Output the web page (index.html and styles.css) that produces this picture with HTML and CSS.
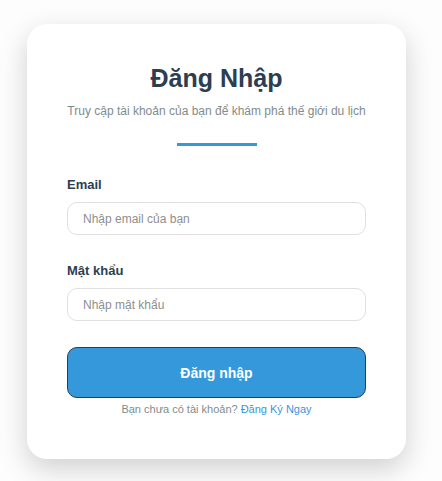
FILE: index.html
```html
<!DOCTYPE html>
<html lang="vi">
<head>
<meta charset="utf-8">
<title>Đăng Nhập</title>
<link rel="stylesheet" href="styles.css">
</head>
<body>
  <div class="card">
    <h1 class="title">Đăng Nhập</h1>
    <p class="subtitle">Truy cập tài khoản của bạn để khám phá thế giới du lịch</p>
    <div class="divider"></div>
    <form class="form">
      <div class="group">
        <label class="label" for="email">Email</label>
        <input class="input" id="email" type="email" placeholder="Nhập email của bạn">
      </div>
      <div class="group">
        <label class="label" for="password">Mật khẩu</label>
        <input class="input" id="password" type="password" placeholder="Nhập mật khẩu">
      </div>
      <button class="btn" type="button">Đăng nhập</button>
      <p class="footer">Bạn chưa có tài khoản? <a class="link" href="#">Đăng Ký Ngay</a></p>
    </form>
  </div>
</body>
</html>
```
FILE: styles.css
```css
* { box-sizing: border-box; }
html, body { margin: 0; padding: 0; }
body {
  background: #fdfdfd;
  font-family: "Liberation Sans", Arial, sans-serif;
  padding-top: 24px;
  padding-bottom: 22px;
}
.card {
  width: 379px;
  margin-left: 27px;
  background: #ffffff;
  border-radius: 20px;
  box-shadow: 0 10px 28px rgba(0, 0, 0, 0.18);
  padding: 39px 40px 43px;
  display: flex;
  flex-direction: column;
  align-items: stretch;
}
.title {
  margin: 0;
  font-size: 25px;
  line-height: 30px;
  font-weight: bold;
  color: #2c3e50;
  text-align: center;
}
.subtitle {
  margin: 10px 0 0;
  font-size: 12px;
  line-height: 16px;
  color: #7f8c8d;
  text-align: center;
  white-space: nowrap;
}
.divider {
  width: 80px;
  height: 3px;
  background: #3498db;
  margin: 24px auto 30px;
}
.form {
  display: flex;
  flex-direction: column;
  margin: 0;
}
.group {
  display: flex;
  flex-direction: column;
  margin-bottom: 27px;
}
.group:nth-child(2) { margin-bottom: 26px; }
.label {
  font-size: 13px;
  line-height: 17px;
  font-weight: bold;
  color: #2c3e50;
  margin-bottom: 9px;
}
.input {
  height: 33px;
  border: 1px solid #e0e0e0;
  border-radius: 10px;
  padding: 0 15px;
  font-family: "Liberation Sans", Arial, sans-serif;
  font-size: 12px;
  color: #333;
  outline: none;
  background: #fff;
}
.input::placeholder { color: #8e8e8e; }
.btn {
  height: 51px;
  background: #3498db;
  border: 1px solid #2c3e50;
  border-radius: 10px;
  color: #ffffff;
  font-family: "Liberation Sans", Arial, sans-serif;
  font-size: 14px;
  font-weight: bold;
  cursor: pointer;
}
.footer {
  margin: 4px 0 0;
  font-size: 11px;
  line-height: 14px;
  color: #7f8c8d;
  text-align: center;
}
.link {
  color: #3498db;
  text-decoration: none;
}
```
